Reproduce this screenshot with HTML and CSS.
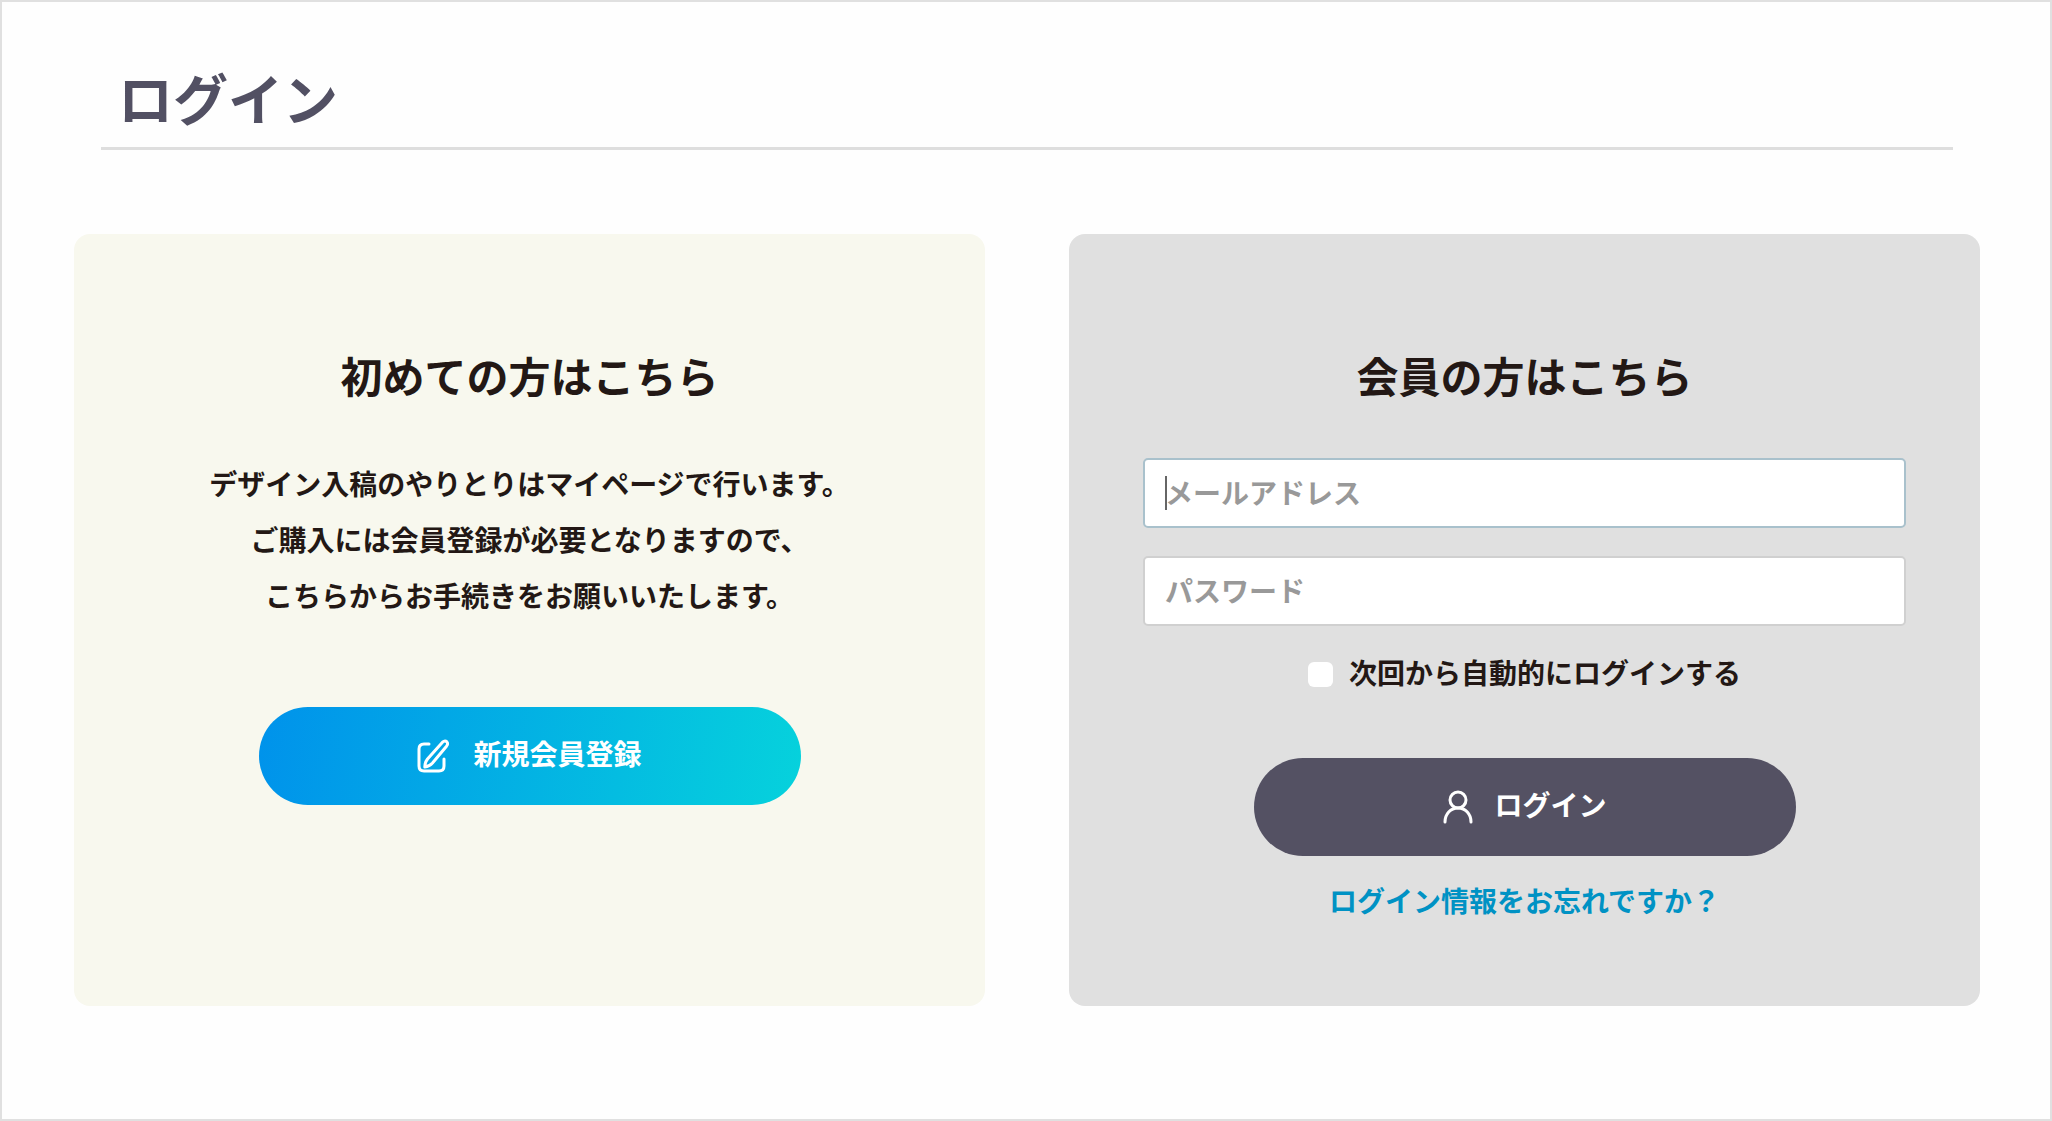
FILE: index.html
```html
<!DOCTYPE html>
<html lang="ja">
<head>
  <meta charset="UTF-8" />
  <meta name="viewport" content="width=device-width, initial-scale=1" />
  <title>ログイン</title>
  <link rel="stylesheet" href="styles.css">
</head>
<body>
  <main class="page">
    <h1 class="page-title">ログイン</h1>

    <div class="columns">
      <!-- 新規会員 -->
      <section class="card card-guest">
        <h2>初めての方はこちら</h2>
        <p class="lead">
          デザイン入稿のやりとりはマイページで行います。<br>
          ご購入には会員登録が必要となりますので、<br>
          こちらからお手続きをお願いいたします。
        </p>
        <button type="button" class="btn btn-entry">
          <svg class="icon" viewBox="0 0 32 34" aria-hidden="true">
            <path d="M12 5H7Q2 5 2 10V27Q2 32 7 32H22Q27 32 27 27V20" />
            <path d="M25.5 3.2Q28 .9 29.9 2.9Q31.4 4.7 29.5 7.2L15.5 24Q12.5 27.4 7.8 28Q7.8 23.4 10.5 20Z" />
          </svg>
          <span class="btn-text">新規会員登録</span>
        </button>
      </section>

      <!-- ログインフォーム -->
      <section class="card card-member">
        <h2>会員の方はこちら</h2>
        <form class="login-form">
          <div class="field field-active">
            <input type="email" id="email" placeholder="メールアドレス" aria-label="メールアドレス" />
          </div>
          <div class="field">
            <input type="password" id="password" placeholder="パスワード" aria-label="パスワード" />
          </div>
          <label class="remember" for="remember">
            <input type="checkbox" id="remember" />
            <span>次回から自動的にログインする</span>
          </label>
          <button type="submit" class="btn btn-login">
            <svg class="icon" viewBox="0 0 32 34" aria-hidden="true">
              <ellipse cx="16" cy="10" rx="8" ry="8" />
              <path d="M3 32C3 24 8.5 18 16 18S29 24 29 32" />
            </svg>
            <span class="btn-text">ログイン</span>
          </button>
          <a class="forgot" href="#">ログイン情報をお忘れですか？</a>
        </form>
      </section>
    </div>
  </main>
</body>
</html>
```
FILE: styles.css
```css
* {
  box-sizing: border-box;
}
body {
  margin: 0;
  font-family: "Noto Sans CJK JP", sans-serif;
  font-size: 28px;
  font-weight: bold;
  line-height: 56px;
  color: #231815;
  background: #fefefe;
}
.page {
  min-height: 100vh;
  padding: 54px 70px 112px 72px;
  border: 2px solid #e0e0e0;
}
.page-title {
  margin: 0 27px 84px;
  padding: 0 17px 11px;
  font-size: 55px;
  line-height: 80px;
  color: #525063;
  border-bottom: 3px solid #dedede;
}
.columns {
  display: grid;
  grid-template-columns: 1fr 1fr;
  gap: 84px;
}
.card {
  display: flex;
  flex-direction: column;
  align-items: center;
  padding: 113px 74px 78px;
  border-radius: 16px;
}
.card-guest {
  background: #f8f8ee;
}
.card-member {
  background: #e0e0e0;
}
.card h2 {
  margin: 0 0 52px;
  font-size: 42px;
  line-height: 56px;
}
.lead {
  margin: 0 0 84px;
  text-align: center;
}
.btn {
  display: flex;
  align-items: center;
  justify-content: center;
  gap: 24px;
  width: 100%;
  max-width: 542px;
  height: 98px;
  padding: 0;
  border: none;
  border-radius: 49px;
  font-family: inherit;
  font-size: 28px;
  font-weight: bold;
  color: #fff;
  cursor: pointer;
}
.btn-text {
  padding-bottom: 6px;
}
.btn-entry {
  background: linear-gradient(100deg, #0092eb, #06d2dc);
}
.btn-login {
  gap: 20px;
  background: #545163;
}
.icon {
  width: 32px;
  height: 34px;
  fill: none;
  stroke: #fff;
  stroke-width: 3;
  stroke-linecap: round;
  stroke-linejoin: round;
}
.login-form {
  display: flex;
  flex-direction: column;
  align-items: center;
  width: 100%;
  padding-top: 3px;
}
.field {
  position: relative;
  width: 100%;
  margin-bottom: 28px;
}
.field input {
  display: block;
  width: 100%;
  height: 70px;
  padding: 0 20px 2px;
  font-family: inherit;
  font-size: 28px;
  font-weight: bold;
  color: #231815;
  background: #fff;
  border: 2px solid #d0d0d0;
  border-radius: 5px;
  outline: none;
}
.field input::placeholder {
  color: #999;
  opacity: 1;
}
.field-active input {
  border-color: #a9c1cc;
}
/* 入力カーソル */
.field-active::after {
  content: "";
  position: absolute;
  top: 18px;
  left: 22px;
  width: 2px;
  height: 34px;
  background: #666;
}
.remember {
  display: flex;
  align-items: center;
  gap: 16px;
  margin: -10px 0 54px;
}
.remember span {
  padding-bottom: 4px;
}
.remember input {
  appearance: none;
  width: 25px;
  height: 25px;
  margin: 0;
  background: #fff;
  border-radius: 6px;
}
.forgot {
  margin-top: 16px;
  color: #0092c4;
  text-decoration: none;
}
```
